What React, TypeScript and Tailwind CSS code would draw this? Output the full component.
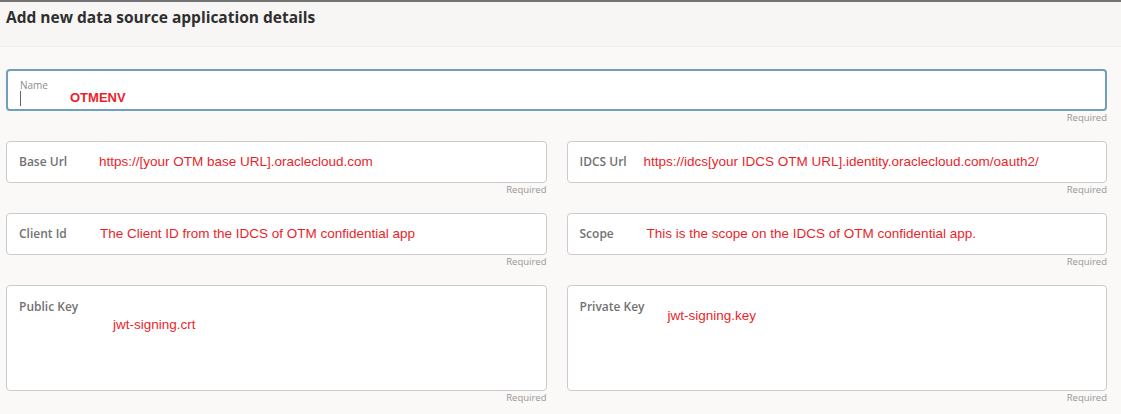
import React from "react";

interface Field {
  label: string;
  value: string;
  labelClass: string;
  valueClass: string;
  tall?: boolean;
}

const rows: Field[][] = [
  [
    {
      label: "Base Url",
      value: "https://[your OTM base URL].oraclecloud.com",
      labelClass: "w-[80px]",
      valueClass: "",
    },
    {
      label: "IDCS Url",
      value: "https://idcs[your IDCS OTM URL].identity.oraclecloud.com/oauth2/",
      labelClass: "w-[64px]",
      valueClass: "",
    },
  ],
  [
    {
      label: "Client Id",
      value: "The Client ID from the IDCS of OTM confidential app",
      labelClass: "w-[81px]",
      valueClass: "",
    },
    {
      label: "Scope",
      value: "This is the scope on the IDCS of OTM confidential app.",
      labelClass: "w-[67px]",
      valueClass: "",
    },
  ],
  [
    {
      label: "Public Key",
      value: "jwt-signing.crt",
      labelClass: "w-[94px]",
      valueClass: "mt-[17px]",
      tall: true,
    },
    {
      label: "Private Key",
      value: "jwt-signing.key",
      labelClass: "w-[88px]",
      valueClass: "mt-[8px]",
      tall: true,
    },
  ],
];

const labelFont = { fontFamily: '"Open Sans", "Noto Sans", sans-serif' };
const redFont = { fontFamily: '"Liberation Sans", Arial, sans-serif' };

const Required = () => (
  <div
    className="h-[14px] text-right text-[9.5px] leading-[14px] text-[#979797]"
    style={labelFont}
  >
    Required
  </div>
);

const FieldBox: React.FC<{ field: Field }> = ({ field }) => (
  <div>
    {field.tall ? (
      <div className="h-[106px] rounded-[4px] border border-[#cbcbcb] bg-white pl-[12px] pt-[14px]">
        <div className="flex items-start">
          <span
            className={`${field.labelClass} shrink-0 text-[12px] font-semibold leading-[14px] text-[#727272]`}
            style={labelFont}
          >
            {field.label}
          </span>
          <span
            className={`${field.valueClass} text-[13.5px] leading-[16px] text-[#ea1f2b]`}
            style={redFont}
          >
            {field.value}
          </span>
        </div>
      </div>
    ) : (
      <div className="flex h-[42px] items-center rounded-[4px] border border-[#cbcbcb] bg-white pl-[12px]">
        <span
          className={`${field.labelClass} shrink-0 text-[12px] font-semibold text-[#727272]`}
          style={labelFont}
        >
          {field.label}
        </span>
        <span className="text-[13.5px] text-[#ea1f2b]" style={redFont}>
          {field.value}
        </span>
      </div>
    )}
    <Required />
  </div>
);

export default function App() {
  return (
    <div className="h-[414px] w-[1121px] overflow-hidden bg-[#faf9f8]">
      {/* Page header */}
      <div className="h-[47px] border-t-2 border-b border-t-[#737373] border-b-[#efedea] bg-[#f7f6f4] pl-[6px] pt-[5px]">
        <h1
          className="text-[15.5px] font-bold leading-[20px] text-[#2f2f2f]"
          style={labelFont}
        >
          Add new data source application details
        </h1>
      </div>

      <div className="flex flex-col gap-y-4 pl-[6px] pr-[14px] pt-[22px]">
        {/* Name field, focused */}
        <div>
          <div className="h-[42px] rounded-[4px] border-2 border-[#6ea0b9] bg-white pl-[12px] pt-[9px]">
            <div
              className="text-[10px] leading-[10px] text-[#8c8c8c]"
              style={labelFont}
            >
              Name
            </div>
            <div className="flex items-center">
              <span className="h-[15px] w-px bg-[#666]" />
              <span
                className="ml-[49px] text-[13px] font-bold leading-[16px] text-[#ea1f2b]"
                style={redFont}
              >
                OTMENV
              </span>
            </div>
          </div>
          <Required />
        </div>

        {rows.map((row, i) => (
          <div key={i} className="grid grid-cols-2 gap-x-5">
            {row.map((f) => (
              <FieldBox key={f.label} field={f} />
            ))}
          </div>
        ))}
      </div>
    </div>
  );
}
